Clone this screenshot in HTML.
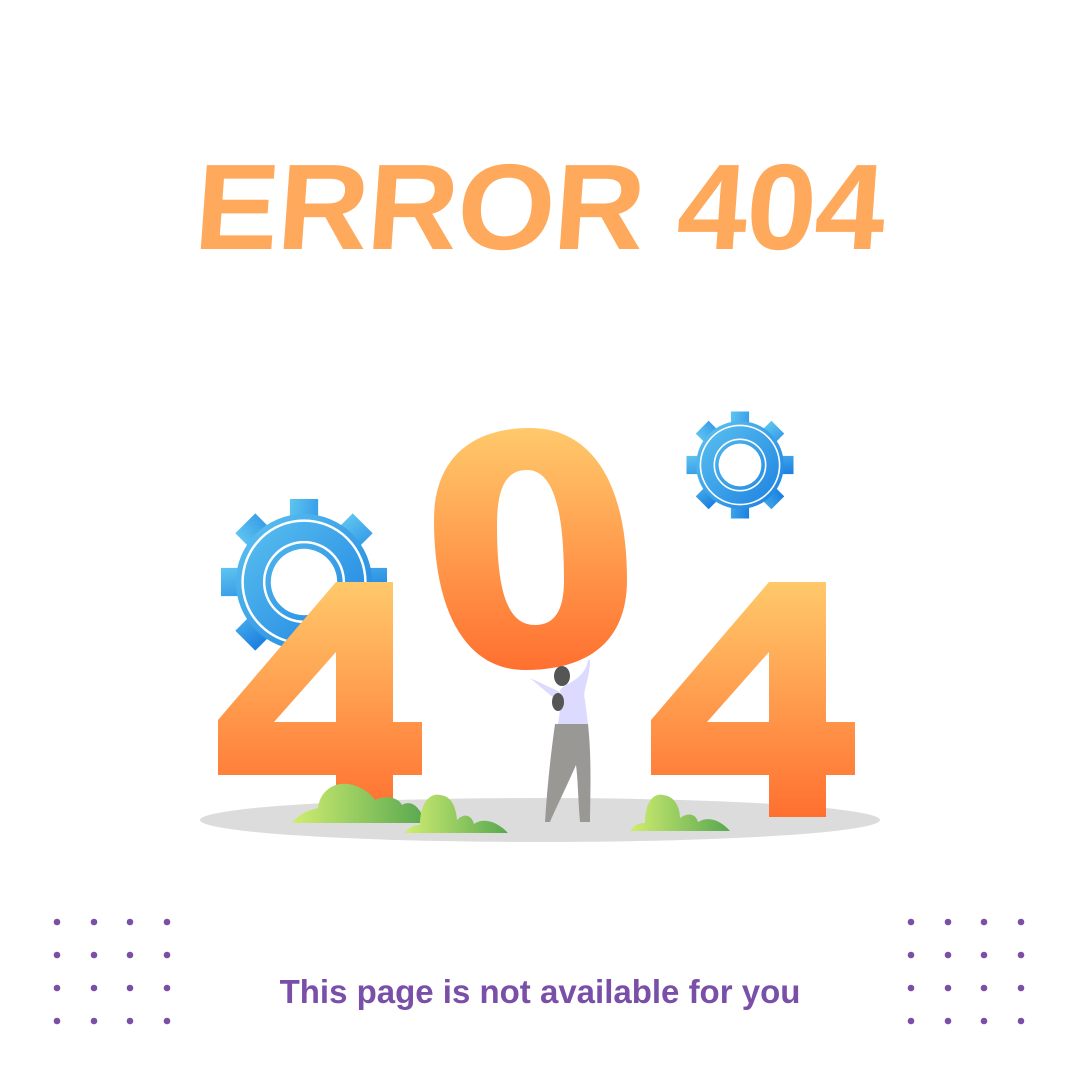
<!DOCTYPE html>
<html><head><meta charset="utf-8"><style>
body{margin:0;width:1080px;height:1080px;background:#fff;overflow:hidden;position:relative;font-family:"Liberation Sans",sans-serif}
.t{position:absolute;left:0;width:1080px;top:137px;text-align:center;font-weight:bold;font-size:122px;color:#fea95c;letter-spacing:-1px;transform:scaleX(1.03) skewX(-4deg);line-height:140px}
.b{position:absolute;left:0;width:1080px;top:973px;text-align:center;font-weight:bold;font-size:33px;color:#7a4fa8}
</style></head><body>
<div class="t">ERROR 404</div>
<svg width="1080" height="1080" style="position:absolute;left:0;top:0">
<defs>
<linearGradient id="o" x1="0" y1="0" x2="0" y2="1"><stop offset="0" stop-color="#ffc96b"/><stop offset="1" stop-color="#ff7030"/></linearGradient>
<linearGradient id="g" x1="0" y1="0" x2="1" y2="1"><stop offset="0" stop-color="#5ec4f0"/><stop offset="1" stop-color="#1a7fe0"/></linearGradient>
<linearGradient id="p" x1="0" y1="0" x2="1" y2="0"><stop offset="0" stop-color="#d0ed70"/><stop offset="1" stop-color="#58a850"/></linearGradient>
<g id="gear"><g fill="url(#g)">
<rect x="-17" y="-100" width="34" height="200"/><rect x="-100" y="-17" width="200" height="34"/>
<rect x="-17" y="-100" width="34" height="200" transform="rotate(45)"/><rect x="-17" y="-100" width="34" height="200" transform="rotate(-45)"/>
<circle r="82"/></g>
<circle r="74" fill="none" stroke="#fff" stroke-width="3"/>
<circle r="48" fill="none" stroke="#fff" stroke-width="3"/>
<circle r="40" fill="#fff"/></g>
</defs>
<ellipse cx="540" cy="820" rx="340" ry="22" fill="#dcdcdc"/>
<use href="#gear" transform="translate(304,582) scale(0.83)"/>
<use href="#gear" transform="translate(740,465) scale(0.535)"/>
<path d="M336 582H393V722H422V775H393V815H336V775H218V720ZM336 652L274 722H336Z" fill="url(#o)" fill-rule="evenodd"/>
<path d="M769 582H826V722H855V775H826V817H769V775H651V720ZM769 652L707 722H769Z" fill="url(#o)" fill-rule="evenodd"/>
<path d="M530 428C590 428 627 480 627 580C627 640 590 670 525 670C465 670 434 610 434 520C434 460 470 428 530 428ZM527 470C505 470 497 490 497 525C497 590 507 625 535 625C555 625 564 610 564 580C564 515 555 470 527 470Z" fill="url(#o)" fill-rule="evenodd"/>
<path d="M292 823C300 812 312 810 318 808C320 790 335 782 348 784C362 786 372 795 375 800C385 795 398 797 402 805C410 800 420 805 425 823Z" fill="url(#p)"/>
<path d="M405 833C410 825 418 825 420 825C420 800 432 793 440 795C452 796 456 808 457 820C465 812 472 816 474 824C485 816 500 824 508 833Z" fill="url(#p)"/>
<path d="M630 831C635 823 642 823 645 823C645 800 655 793 663 795C675 796 680 808 680 818C688 812 696 814 698 822C710 815 722 822 730 831Z" fill="url(#p)"/>
<path d="M555 724H588C592 760 590 800 590 822H580C578 800 578 780 576 765C565 790 555 810 550 822H545C547 790 550 760 555 724Z" fill="#9a9894"/>
<path d="M560 690C565 683 585 680 588 660L590 660C590 680 582 690 585 700L588 724H558C560 710 562 700 560 690ZM530 678L560 692L556 700Z" fill="#dcdaff"/>
<ellipse cx="562" cy="676" rx="8" ry="10" fill="#555"/>
<ellipse cx="558" cy="702" rx="6" ry="9" fill="#555"/>
<g fill="#7b4fa6">
<g id="d"><circle cx="57" cy="922" r="3.3"/><circle cx="94" cy="922" r="3.3"/><circle cx="130" cy="922" r="3.3"/><circle cx="167" cy="922" r="3.3"/></g>
<use href="#d" y="33"/><use href="#d" y="66"/><use href="#d" y="99"/>
<use href="#d" x="854"/><use href="#d" x="854" y="33"/><use href="#d" x="854" y="66"/><use href="#d" x="854" y="99"/>
</g>
</svg>
<div class="b">This page is not available for you</div>
</body></html>
